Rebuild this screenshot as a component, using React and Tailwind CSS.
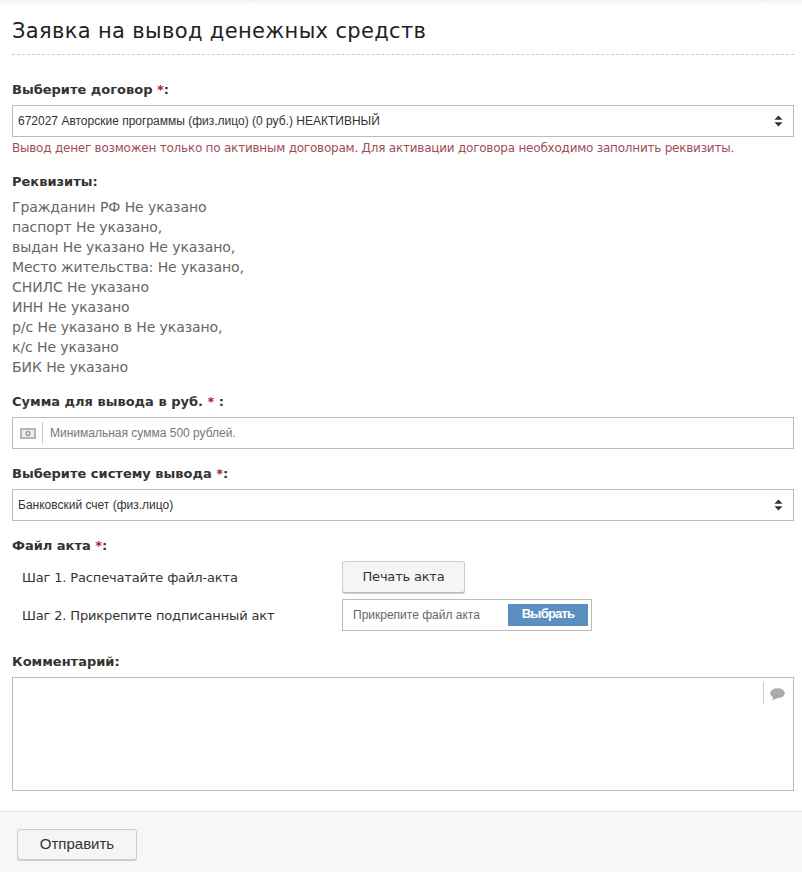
const V = { fontFamily: '"DejaVu Sans", Verdana, sans-serif' };

function Label({ children, className = "" }) {
  return (
    <div className={`text-[13px] leading-[18px] font-bold text-[#333] ${className}`}>{children}</div>
  );
}

function Star() {
  return <span className="text-[#a5202f]">*</span>;
}

function SelectBox({ text }) {
  return (
    <div className="flex h-8 items-center justify-between border border-[#bbb] pr-[10px] pl-[5px] font-['Liberation_Sans'] text-xs text-[#333]">
      <span>{text}</span>
      <svg width="9" height="12" viewBox="0 0 9 12">
        <path d="M4.5 0.5 L8.5 4.8 H0.5 Z M0.5 7.2 H8.5 L4.5 11.5 Z" fill="#333" />
      </svg>
    </div>
  );
}

const lines = [
  "Гражданин РФ Не указано",
  "паспорт Не указано,",
  "выдан Не указано Не указано,",
  "Место жительства: Не указано,",
  "СНИЛС Не указано",
  "ИНН Не указано",
  "р/с Не указано в Не указано,",
  "к/с Не указано",
  "БИК Не указано",
];

export default function App() {
  return (
    <div style={V} className="relative h-[872px] w-[802px] overflow-hidden bg-white">
      <div className="h-[5px] bg-gradient-to-b from-[#f3f3f3] to-white" />
      <div className="pr-2 pl-3">
        <h1 className="mt-[12px] border-b border-dashed border-[#ccc] pb-[8px] text-[21px] leading-[29px] font-normal tracking-[0.35px] text-[#222]">
          Заявка на вывод денежных средств
        </h1>
        <Label className="mt-[26px]">
          Выберите договор <Star />:
        </Label>
        <div className="mt-[6px]">
          <SelectBox text="672027 Авторские программы (физ.лицо) (0 руб.) НЕАКТИВНЫЙ" />
        </div>
        <div className="mt-[2px] text-xs leading-[18px] tracking-[-0.22px] text-[#a04d58]">
          Вывод денег возможен только по активным договорам. Для активации договора необходимо заполнить реквизиты.
        </div>
        <Label className="mt-[16px]">Реквизиты:</Label>
        <div className="mt-[6px] text-sm leading-5 tracking-[-0.08px] text-[#666]">
          {lines.map((l) => (
            <div key={l}>{l}</div>
          ))}
        </div>
        <Label className="mt-[16px]">
          Сумма для вывода в руб. <Star /> :
        </Label>
        <div className="mt-[6px] flex h-8 items-center border border-[#bbb] font-['Liberation_Sans'] text-xs text-[#777]">
          <div className="flex h-[22px] w-[30px] items-center justify-center border-r border-[#ccc]">
            <svg width="16" height="11" viewBox="0 0 16 11">
              <rect x="0" y="0" width="16" height="11" fill="#b5b5b5" />
              <rect x="2" y="2" width="12" height="7" fill="#eeeeee" />
              <ellipse cx="8" cy="5.5" rx="2.6" ry="2.8" fill="#999" />
              <ellipse cx="8" cy="5.5" rx="1.2" ry="1.4" fill="#e4e4e4" />
            </svg>
          </div>
          <span className="pl-[7px]">Минимальная сумма 500 рублей.</span>
        </div>
        <Label className="mt-[16px]">
          Выберите систему вывода <Star />:
        </Label>
        <div className="mt-[6px]">
          <SelectBox text="Банковский счет (физ.лицо)" />
        </div>
        <Label className="mt-[16px]">
          Файл акта <Star />:
        </Label>
        <div className="mt-[6px] flex items-center pl-[10px] text-[13px] tracking-[-0.15px] text-[#333]">
          <span className="w-[320px] pt-[2px]">Шаг 1. Распечатайте файл-акта</span>
          <button className="h-8 w-[123px] rounded-[3px] border border-[#ccc] border-b-[#bbb] bg-[#f5f5f5] text-[13px] tracking-[-0.2px] text-[#333] shadow-[0_1px_0_#ccc]">
            Печать акта
          </button>
        </div>
        <div className="mt-[6px] flex items-center pl-[10px] text-[13px] tracking-[-0.15px] text-[#333]">
          <span className="w-[320px] pt-[2px]">Шаг 2. Прикрепите подписанный акт</span>
          <div className="flex h-8 w-[250px] items-center justify-between border border-[#bbb] pr-[3px] pl-[10px] font-['Liberation_Sans'] text-xs tracking-normal text-[#666]">
            <span>Прикрепите файл акта</span>
            <span className="flex h-[22px] w-20 items-center justify-center bg-[#5b8fbf] pb-[2px] text-[13px] font-bold tracking-[-0.8px] text-[#fff]">
              Выбрать
            </span>
          </div>
        </div>
        <Label className="mt-[22px]">Комментарий:</Label>
        <div className="relative mt-[6px] h-[114px] border border-[#bbb]">
          <div className="absolute top-1 right-[29px] h-[22px] border-r border-[#ccc]" />
          <svg className="absolute top-[10px] right-2" width="15" height="13" viewBox="0 0 15 13">
            <ellipse cx="7.5" cy="5.2" rx="7.3" ry="5" fill="#aaa" />
            <path d="M3 8 L2.5 12.5 L8 9.5 Z" fill="#aaa" />
          </svg>
        </div>
      </div>
      <div className="absolute right-0 bottom-0 left-0 h-[61px] border-t border-[#ddd] bg-[#f7f7f7] pt-[17px] pl-[17px]">
        <button className="h-[31px] w-[120px] rounded-[3px] border border-[#ccc] bg-[#f5f5f5] font-['Liberation_Sans'] text-[15px] text-[#333] shadow-[0_1px_0_#ccc]">
          Отправить
        </button>
      </div>
    </div>
  );
}
